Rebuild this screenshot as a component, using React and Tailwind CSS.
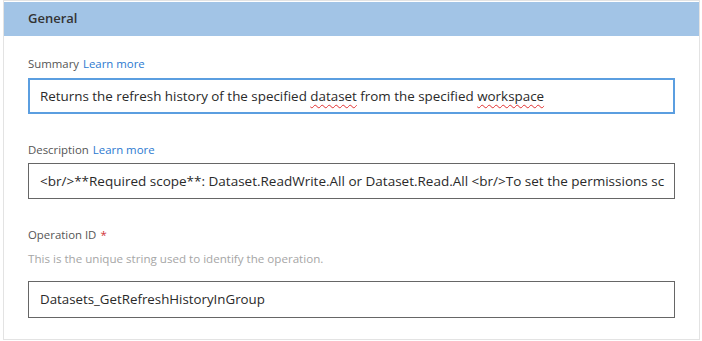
export default function App() {
  return (
    <div className="w-[702px] h-[341px] bg-white font-['Open_Sans',sans-serif] overflow-hidden">
      <div className="ml-[3px] w-[697px] h-[340px] border border-[#e3e3e3] pt-px">
        <div className="h-[34px] bg-[#a2c4e6] flex items-center pl-[24px] text-[13px] font-semibold text-[#333]">
          General
        </div>
        <div className="pl-[24px] pr-[20px] pt-[18px]">
          <div className="h-[20px] flex items-center text-[11.4px] text-[#555]">
            Summary<span className="ml-[4px] text-[#2b79d0]">Learn more</span>
          </div>
          <div className="mt-[4px] h-[36px] w-[647px] border-2 border-[#5b9ee0] flex items-center pl-[10px] text-[13.4px] text-[#2a2a2a] whitespace-nowrap overflow-hidden">
            Returns the refresh history of the specified&nbsp;
            <span className="underline decoration-wavy decoration-[#e03030] underline-offset-[3px] decoration-1">dataset</span>
            &nbsp;from the specified&nbsp;
            <span className="underline decoration-wavy decoration-[#e03030] underline-offset-[3px] decoration-1">workspace</span>
          </div>

          <div className="mt-[26px] h-[20px] flex items-center text-[11.4px] text-[#555]">
            Description<span className="ml-[4px] text-[#2b79d0]">Learn more</span>
          </div>
          <div className="mt-[3px] h-[36px] w-[647px] border border-[#666] flex items-center pl-[11px] text-[13.5px] text-[#2a2a2a] whitespace-nowrap overflow-hidden">
            &lt;br/&gt;**Required scope**: Dataset.ReadWrite.All or Dataset.Read.All &lt;br/&gt;To set the permissions sc
          </div>

          <div className="mt-[26px] h-[20px] flex items-center text-[11.4px] text-[#555]">
            Operation ID<span className="ml-[4px] text-[#d13438]">*</span>
          </div>
          <div className="mt-[4px] h-[20px] flex items-center text-[11.6px] text-[#a6a6a6]">
            This is the unique string used to identify the operation.
          </div>
          <div className="mt-[12px] h-[37px] w-[647px] border border-[#666] flex items-center pl-[11px] text-[13.3px] text-[#2a2a2a] whitespace-nowrap overflow-hidden">
            Datasets_GetRefreshHistoryInGroup
          </div>
        </div>
      </div>
    </div>
  );
}
